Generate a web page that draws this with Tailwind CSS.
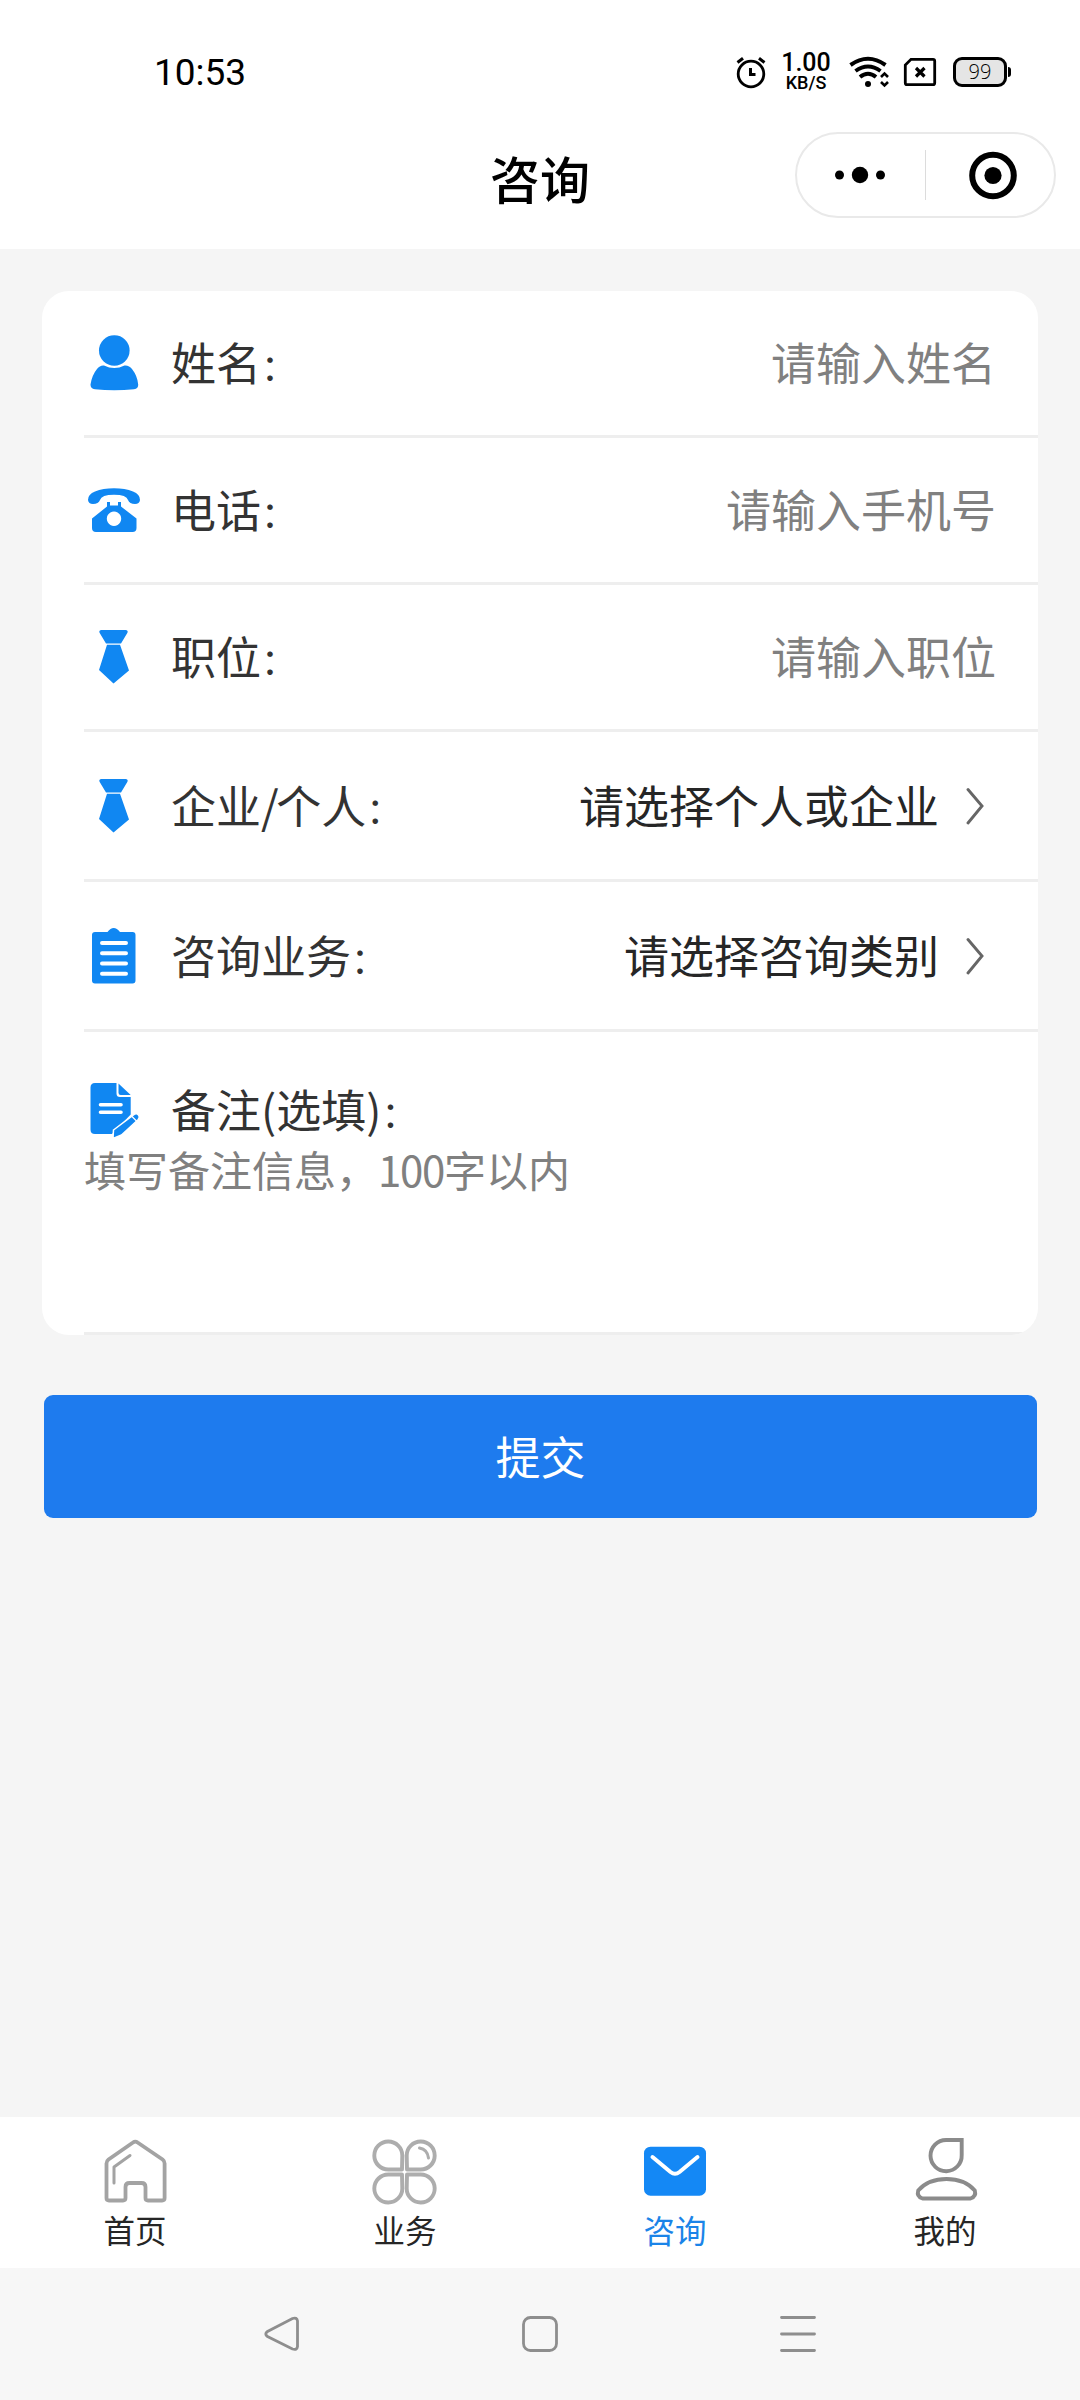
<!DOCTYPE html>
<html lang="zh-CN">
<head>
<meta charset="utf-8">
<title>咨询</title>
<script src="https://cdn.jsdelivr.net/npm/@tailwindcss/browser@4"></script>
</head>
<body class="flex h-[2400px] w-[1080px] flex-col bg-[#f5f5f5] font-['Noto_Sans_CJK_SC',sans-serif]">

<header class="flex h-[249px] flex-col bg-white text-black">
  <div class="flex h-[132px] items-center pt-[12px] pl-[154px]">
    <span class="w-[580px] font-['Roboto',sans-serif] text-[37px] leading-none">10:53</span>
    <svg class="h-[34px] w-[34px]" viewBox="734 55 34 34" fill="none" stroke="#000">
      <circle cx="751" cy="74" r="12.8" stroke-width="2.8"/>
      <path d="M737.5 62.5l5.5-4.3M764.5 62.5l-5.5-4.3" stroke-width="3"/>
      <path d="M750.5 68v6.5h5" stroke-width="3"/>
    </svg>
    <div class="ml-[13px] flex w-[50px] flex-col items-center font-['Roboto',sans-serif] font-medium">
      <span class="text-[25px] leading-[22px]">1.00</span>
      <span class="text-[18px] leading-[18px]">KB/S</span>
    </div>
    <svg class="ml-[17px] h-[34px] w-[42px]" viewBox="848 55 42 34" fill="none" stroke="#000" stroke-width="4">
      <path d="M850.5 65Q868 52.500 885.500 65"/>
      <path d="M855.500 71Q868 62 880.500 71"/>
      <path d="M860 77Q868 70.500 876 77"/>
      <circle cx="868" cy="84" r="3" fill="#000" stroke="none"/>
      <path d="M881 77l3.500-3.500l3.500 3.500M881 82l3.500 3.500l3.500-3.500" stroke-width="2.600"/>
    </svg>
    <svg class="ml-[13px] h-[30px] w-[34px]" viewBox="903 57 34 30" fill="none" stroke="#000" stroke-width="2.800">
      <path d="M911 59.300h22q1.700 0 1.700 1.700v22q0 1.700-1.700 1.700h-26q-1.700 0-1.700-1.700v-18z"/>
      <path d="M916 68l8.500 8.500M924.500 68l-8.500 8.500" stroke-width="3.200"/>
    </svg>
    <div class="ml-[16px] flex h-[30px] w-[54px] items-center justify-center rounded-[9px] border-3 border-black bg-[#e5e5e5] font-['Open_Sans',sans-serif] text-[20px] font-light leading-none">99</div>
    <div class="ml-px h-[10px] w-[3px] rounded-r-sm bg-black"></div>
  </div>
  <div class="flex h-[117px] items-start pl-[345px]">
    <h1 class="w-[390px] pt-[20px] text-center text-[50px] font-medium leading-[51px]">咨询</h1>
    <div class="ml-[60px] flex h-[86px] w-[261px] items-center rounded-full border-2 border-[#e9e9e9]">
      <svg class="h-[50px] w-[256px]" viewBox="797 150 256 50">
        <circle cx="839.500" cy="175" r="4.500"/><circle cx="860" cy="175" r="8.200"/><circle cx="880.500" cy="175" r="4.500"/>
        <path d="M925.500 150v50" stroke="#dcdcdc"/>
        <circle cx="993" cy="175.500" r="20.800" fill="none" stroke="#000" stroke-width="6"/><circle cx="993" cy="175.500" r="8.600"/>
      </svg>
    </div>
  </div>
</header>

<main class="flex flex-1 flex-col px-[42px] pt-[42px]">
  <form class="flex h-[1044px] flex-col overflow-hidden rounded-[27px] bg-white pl-[42px] text-[45px] leading-none text-[#333]">
    <div class="flex h-[147px] items-center border-b-3 border-[#eee] pr-[42px]">
      <svg class="h-[60px] w-[60px]" viewBox="84 333 60 60" fill="#1087f2">
        <circle cx="114.300" cy="350.500" r="15.300"/>
        <path d="M104 365.500Q114.300 370.500 124.500 365.500Q129 365 132 369Q137.500 376 138.200 384.500Q138.500 388.500 134 389.300Q114 391 95 389.300Q90.300 388.500 90.500 384.500Q92 375 97 369Q100 365 104 365.500z"/>
      </svg>
      <span class="ml-[27px] pb-[3px]">姓名<span class="text-[36px]">：</span></span><span class="ml-auto pb-[3px] text-[#808080]">请输入姓名</span>
    </div>
    <div class="flex h-[147px] items-center border-b-3 border-[#eee] pr-[42px]">
      <svg class="h-[60px] w-[60px]" viewBox="84 480 60 60" fill="#1087f2">
        <path d="M88 500Q88 494 95 491.500Q103 488.200 114 488.200Q125 488.200 133 491.500Q140 494 140 500Q139.500 504 135 504Q129.500 504 128 500Q126.500 494.700 114 494.700Q101.500 494.700 100 500Q98.500 504 93 504Q88.500 504 88 500z"/>
        <path fill-rule="evenodd" d="M107 502h3v3.500h8V502h3v4.500l15.500 12V528q0 4-4 4H96q-4 0-4-4v-9.500l15-12zM114 511.500a7.200 7.200 0 1 0 .01 0z"/>
      </svg>
      <span class="ml-[27px] pb-[3px]">电话<span class="text-[36px]">：</span></span><span class="ml-auto pb-[3px] text-[#808080]">请输入手机号</span>
    </div>
    <div class="flex h-[147px] items-center border-b-3 border-[#eee] pr-[42px]">
      <svg class="h-[60px] w-[60px]" viewBox="84 627 60 60" fill="#1087f2">
        <path d="M101 630h25q2.500.5 1.300 3l-6.300 10.500h-15l-6.300-10.500q-1.200-2.500 1.300-3zM107 644.800h13l9 25.700l-15.500 13l-14.500-13.500z"/>
      </svg>
      <span class="ml-[27px] pb-[3px]">职位<span class="text-[36px]">：</span></span><span class="ml-auto pb-[3px] text-[#808080]">请输入职位</span>
    </div>
    <div class="flex h-[150px] items-center border-b-3 border-[#eee] pr-[54px]">
      <svg class="h-[60px] w-[60px]" viewBox="84 627 60 60" fill="#1087f2">
        <path d="M101 630h25q2.500.5 1.300 3l-6.300 10.500h-15l-6.300-10.500q-1.200-2.500 1.300-3zM107 644.800h13l9 25.700l-15.500 13l-14.500-13.500z"/>
      </svg>
      <span class="ml-[27px] pb-[3px]">企业<span class="tracking-[-2.5px]">/</span>个人<span class="text-[36px]">：</span></span><span class="ml-auto pb-[3px] text-[#262626]">请选择个人或企业</span>
      <svg class="ml-[27px] h-[38px] w-[18px]" viewBox="0 0 18 38" fill="none" stroke="#666" stroke-width="2.900" stroke-linecap="round"><path d="M2 2.500L16 19L2 36"/></svg>
    </div>
    <div class="flex h-[150px] items-center border-b-3 border-[#eee] pr-[54px]">
      <svg class="h-[60px] w-[60px]" viewBox="84 926 60 60">
        <path fill="#1087f2" d="M95 932h12.500q3-4 6.200-4t6.300 4h12.500q3 0 3 3v45.500q0 3-3 3H95q-3 0-3-3V935q0-3 3-3z"/>
        <path stroke="#fff" stroke-width="4" stroke-linecap="round" d="M102 943h24M102 953.300h24M102 963.500h24M102 973.700h24"/>
      </svg>
      <span class="ml-[27px] pb-[3px]">咨询业务<span class="text-[36px]">：</span></span><span class="ml-auto pb-[3px] text-[#262626]">请选择咨询类别</span>
      <svg class="ml-[27px] h-[38px] w-[18px]" viewBox="0 0 18 38" fill="none" stroke="#666" stroke-width="2.900" stroke-linecap="round"><path d="M2 2.500L16 19L2 36"/></svg>
    </div>
    <div class="flex h-[303px] flex-col border-b-3 border-[#eee] pt-[48px]">
      <div class="flex h-[60px] items-center">
        <svg class="h-[60px] w-[60px]" viewBox="84 1080 60 60" fill="#1087f2">
          <path d="M95 1083h21.500v10.500q0 3.500 3.500 3.500h10.700v17.500l-18.700 19.500h-17q-4.500 0-4.500-4.500v-42q0-4.500 4.500-4.500z"/>
          <path d="M118.500 1083.500L130.700 1095h-10q-2.200 0-2.200-2.200z"/>
          <path stroke="#fff" stroke-width="3.600" stroke-linecap="round" d="M100.500 1104.700h20.500M100.500 1112.300h20.500"/>
          <path stroke="#fff" stroke-width="1.500" d="M113.500 1130L133.500 1114.800q3.500-2.500 5.500 1q.8 2-1 4L121.500 1135l-8.500 3.500z"/>
          <path stroke="#fff" stroke-width="1.200" d="M131.500 1116l5.500 5.500"/>
        </svg>
        <span class="ml-[27px] pb-[4px]">备注(选填)<span class="text-[36px]">：</span></span>
      </div>
      <p class="pt-[8px] text-[42px] leading-[42px] text-[#808080]">填写备注信息，<span class="tracking-[-1.3px]">100</span>字以内</p>
    </div>
  </form>
  <button class="mt-[60px] mr-px ml-[2px] h-[123px] rounded-[9px] bg-[#1e7bee] pb-[3px] text-[45px] leading-none text-white">提交</button>
</main>

<nav class="grid h-[151px] grid-cols-4 bg-white text-[31.5px] leading-none text-[#262626]">
  <div class="flex flex-col items-center pt-[19px]">
    <svg class="h-[72px] w-[72px]" viewBox="99 2136 72 72" fill="none" stroke="#a3a3a3" stroke-width="3.800" stroke-linejoin="round" stroke-linecap="round">
      <path d="M133 2142.500q2.300-1.700 4.600 0l25 17q2 1.500 2 4V2198q0 2.500-2.500 2.500H148q-2.500 0-2.500-2.500v-11q0-4-4-4h-12q-4 0-4 4v11q0 2.500-2.500 2.500h-14q-2.500 0-2.500-2.500v-34.500q0-2.500 2-4z"/>
      <path d="M114 2183v-16l16-11.500" stroke-width="3"/>
    </svg>
    <span class="mt-[6px]">首页</span>
  </div>
  <div class="flex flex-col items-center pt-[19px]">
    <svg class="h-[72px] w-[72px]" viewBox="369 2136 72 72" fill="none" stroke="#adadad" stroke-width="3.900" stroke-linejoin="round" stroke-linecap="round">
      <path d="M402 2169.500H388.500a14 14 0 1 1 13.800-14zM407 2169.500h13.500a14 14 0 1 0-13.800-14zM402 2174.500H388.500a14 14 0 1 0 13.800 14zM407 2174.500h13.500a14 14 0 1 1-13.800 14z"/>
      <path d="M419.500 2148q8 1.500 9 10" stroke-width="3"/>
    </svg>
    <span class="mt-[6px]">业务</span>
  </div>
  <div class="flex flex-col items-center pt-[19px] text-[#1b84e8]">
    <svg class="h-[72px] w-[72px]" viewBox="639 2136 72 72">
      <rect x="644" y="2146.700" width="62" height="49" rx="6.500" fill="#1488f5"/>
      <path d="M652.500 2157l18 15q4.500 3.500 9 0l18-15" fill="none" stroke="#fff" stroke-width="4" stroke-linecap="round"/>
    </svg>
    <span class="mt-[6px]">咨询</span>
  </div>
  <div class="flex flex-col items-center pt-[19px]">
    <svg class="h-[72px] w-[72px]" viewBox="909 2136 72 72" fill="none" stroke="#8b8b8b" stroke-width="3.900">
      <path d="M961.700 2140v15a15.600 15.600 0 1 1-15.600-15z"/>
      <path d="M922.500 2198.500q-6-2-4.300-8q10-11.500 28.300-11.500t28.300 11.500q1.700 6-4.300 8z" stroke-linejoin="round"/>
    </svg>
    <span class="mt-[6px]">我的</span>
  </div>
</nav>

<footer class="flex h-[132px] items-center bg-[#f7f7f7] pl-[260px]">
  <svg class="h-[44px] w-[560px]" viewBox="260 2312 560 44" fill="none" stroke="#8e8e8e" stroke-width="2.800" stroke-linecap="round">
    <path d="M267.500 2331.500q-3.500 2.500 0 5l25 12.500q4.500 1.500 5-2.500v-25.500q-.5-4-5-2.500z"/>
    <rect x="523.500" y="2317.500" width="33" height="33" rx="7"/>
    <path d="M781.500 2317.500h33M781.500 2334h33M781.500 2350.500h33"/>
  </svg>
</footer>
</body>
</html>
